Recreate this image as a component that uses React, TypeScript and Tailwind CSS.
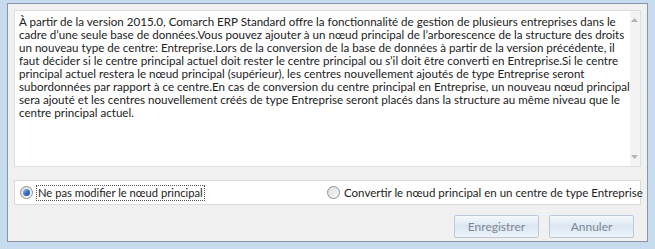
import { useState } from 'react';

const lines = [
    'À partir de la version 2015.0, Comarch ERP Standard offre la fonctionnalité de gestion de plusieurs entreprises dans le',
    'cadre d’une seule base de données.Vous pouvez ajouter à un nœud principal de l’arborescence de la structure des droits',
    'un nouveau type de centre: Entreprise.Lors de la conversion de la base de données à partir de la version précédente, il',
    'faut décider si le centre principal actuel doit rester le centre principal ou s’il doit être converti en Entreprise.Si le centre',
    'principal actuel restera le nœud principal (supérieur), les centres nouvellement ajoutés de type Entreprise seront',
    'subordonnées par rapport à ce centre.En cas de conversion du centre principal en Entreprise, un nouveau nœud principal',
    'sera ajouté et les centres nouvellement créés de type Entreprise seront placés dans la structure au même niveau que le',
    'centre principal actuel.',
];

function Radio({ checked }: { checked: boolean }) {
    return (
        <span className="relative flex h-[13px] w-[13px] shrink-0 items-center justify-center rounded-full border border-[#8e8f8f] bg-gradient-to-br from-[#dcdcdc] to-[#fafafa]">
            {checked && (
                <span className="h-[7px] w-[7px] rounded-full bg-gradient-to-br from-[#a9c5ec] via-[#3d72c4] to-[#1b4f9c]" />
            )}
        </span>
    );
}

function WinButton({ label }: { label: string }) {
    return (
        <button className="flex h-[23px] w-[85px] items-center justify-center rounded-[2px] border border-[#bac9d9] bg-gradient-to-b from-[#f5f8fb] via-[#dbe6f2] to-[#eef3f8] text-[12px] text-[#7d8793]">
            {label}
        </button>
    );
}

export default function App() {
    const [choice, setChoice] = useState<'keep' | 'convert'>('keep');
    return (
        <div
            className="h-[249px] w-[655px] bg-[#c7dbef] pb-[7px] pl-[7px] pr-[7px] pt-[3px]"
            style={{ fontFamily: 'Lato, "Noto Sans", sans-serif' }}
        >
            <div className="flex h-full flex-col border border-[#8797ab] bg-[#f0f0f0] px-[6px] pt-[6px]">
                <div className="flex h-[157px] border border-[#d9dfe6] bg-white">
                    <div className="flex-1 pl-[4px] pt-[4px] text-[11.6px] leading-[13px] text-[#222]">
                        {lines.map((l, i) => (
                            <div key={i} className="whitespace-nowrap">{l}</div>
                        ))}
                    </div>
                    <div className="flex w-[17px] flex-col items-center justify-between bg-[#f3f3f3] py-[7px]">
                        <svg width="7" height="4" viewBox="0 0 7 4"><path d="M0 4 L3.5 0 L7 4 Z" fill="#b0b4b9" /></svg>
                        <svg width="7" height="4" viewBox="0 0 7 4"><path d="M0 0 L3.5 4 L7 0 Z" fill="#b0b4b9" /></svg>
                    </div>
                </div>
                <div className="mt-[13px] flex h-[25px] items-center border border-[#dadada] bg-white text-[#222]">
                    <label className="flex w-[309px] shrink-0 items-center gap-[3px] pl-[5px] text-[11.2px]" onClick={() => setChoice('keep')}>
                        <Radio checked={choice === 'keep'} />
                        <span className="whitespace-nowrap border border-dotted border-[#555] px-[1px] leading-[14px]">Ne pas modifier le nœud principal</span>
                    </label>
                    <label className="flex items-center gap-[4px] pl-[3px] text-[11.5px]" onClick={() => setChoice('convert')}>
                        <Radio checked={choice === 'convert'} />
                        <span className="whitespace-nowrap leading-[14px]">Convertir le nœud principal en un centre de type Entreprise</span>
                    </label>
                </div>
                <div className="mt-[10px] flex justify-end gap-[10px] pr-[7px]">
                    <WinButton label="Enregistrer" />
                    <WinButton label="Annuler" />
                </div>
            </div>
        </div>
    );
}
